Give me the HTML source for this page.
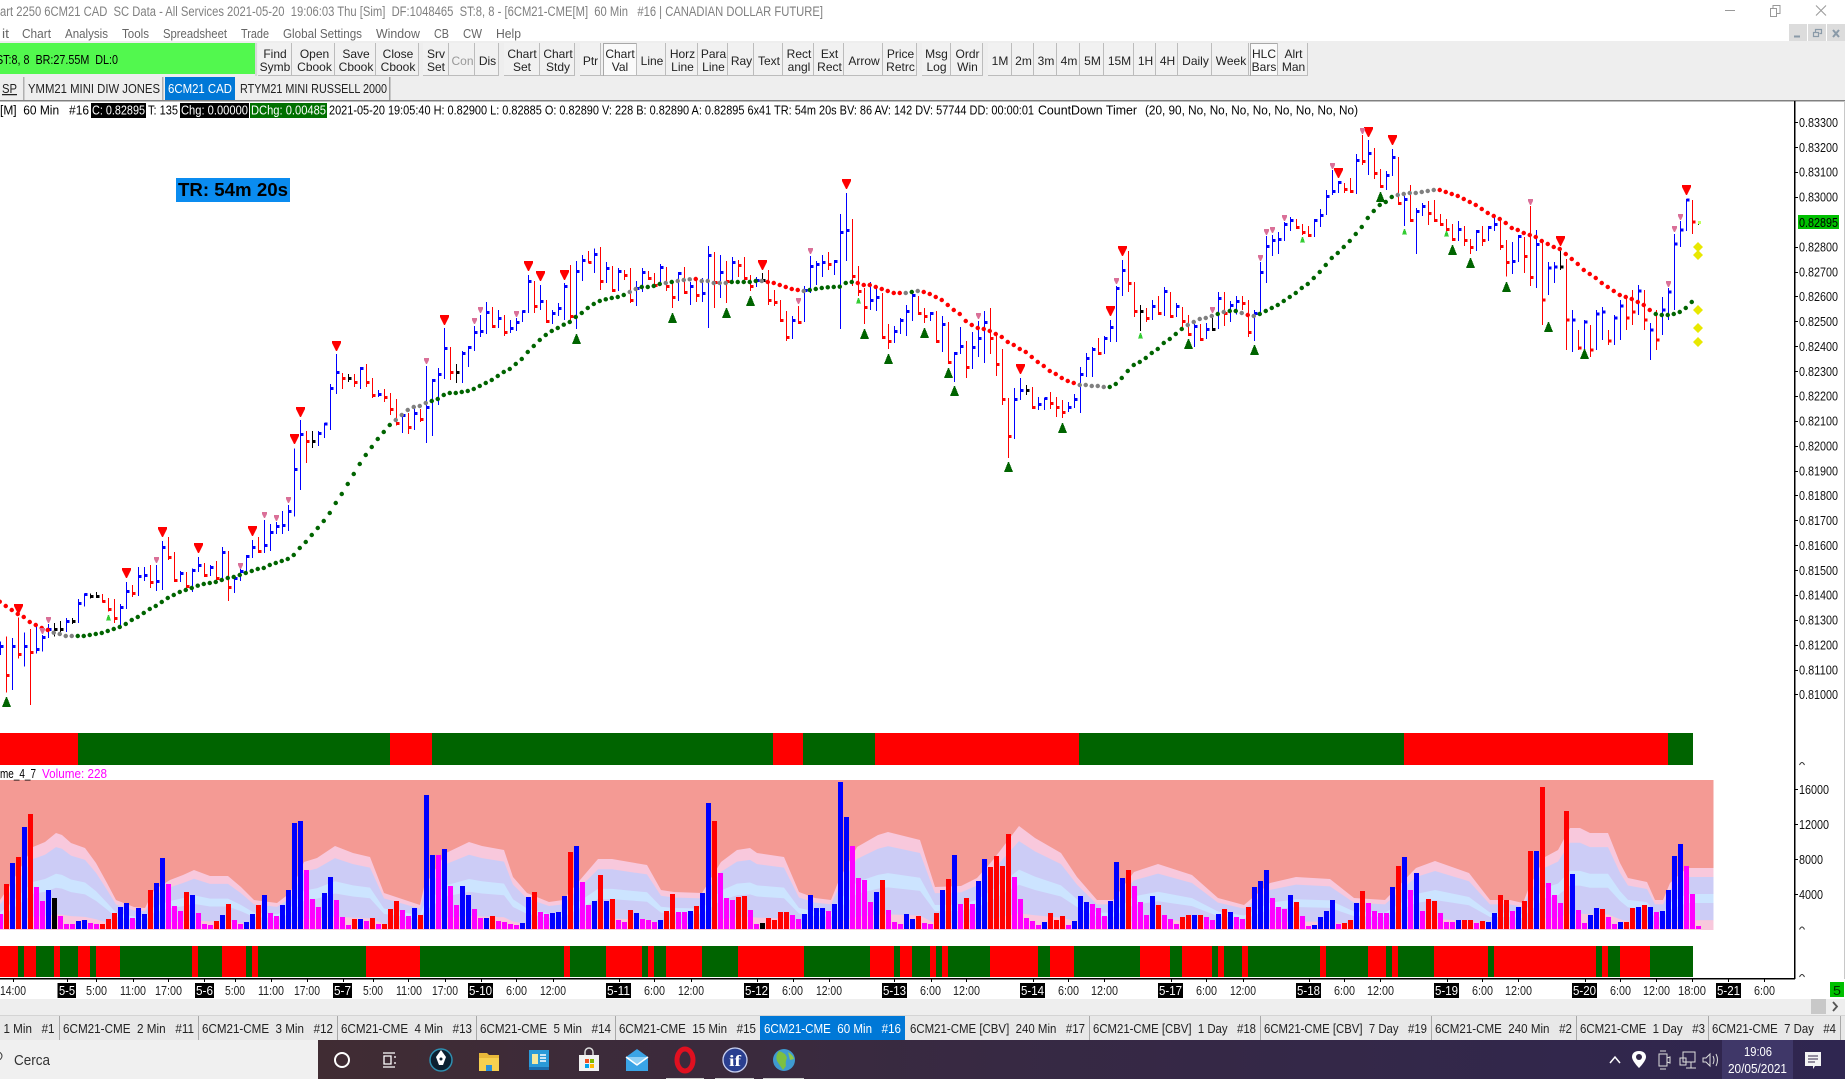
<!DOCTYPE html>
<html><head><meta charset="utf-8"><title>6CM21 CAD</title>
<style>
html,body{margin:0;padding:0;background:#fff;width:1845px;height:1079px;overflow:hidden}
svg{display:block;position:absolute;left:0;top:0}
text{font-family:"Liberation Sans",sans-serif;font-size:13px;white-space:pre;fill:#000}
.ttl text{fill:#808080;font-size:13.5px}
.men text{fill:#666;font-size:13px}
.btn text{font-size:12px;fill:#222;text-anchor:middle}
.tab text{font-size:12.5px;fill:#222}
.ax text{font-size:13px;fill:#111}
.tm text{font-size:13px;fill:#222}
.tw text{fill:#fff}
.v path,.l path,.q path{fill:none;vector-effect:non-scaling-stroke}
.v,.l{shape-rendering:crispEdges}
.v path{stroke-width:5}
.l path{stroke-width:1}
.l path.t{stroke-width:3}
.q path{stroke-width:4.4;stroke-linecap:round}
.r{stroke:#f00}.b{stroke:#00f}.m{stroke:#f0f}.k{stroke:#000}.g{stroke:#006400}.y{stroke:#808080}
</style></head><body>
<svg xmlns="http://www.w3.org/2000/svg" width="1845" height="1079" viewBox="0 0 1845 1079">
<rect width="1845" height="1079" fill="#fff"/>
<g class="ttl"><text x="0" y="16" textLength="823" lengthAdjust="spacingAndGlyphs">art 2250 6CM21 CAD  SC Data - All Services 2021-05-20  19:06:03 Thu [Sim]  DF:1048465  ST:8, 8 - [6CM21-CME[M]  60 Min   #16 | CANADIAN DOLLAR FUTURE]</text></g>
<path d="M1725 10.5h10" stroke="#999" fill="none"/>
<path d="M1770.5 8.5h6v8h-6zM1773 8.5v-3h7v8h-3" stroke="#999" fill="none"/>
<path d="M1816 5.5l10 10M1826 5.5l-10 10" stroke="#999" fill="none"/>
<rect x="1789" y="24" width="18" height="17" fill="#dcdcdc"/><rect x="1808" y="24" width="18" height="17" fill="#dcdcdc"/><rect x="1827" y="24" width="18" height="17" fill="#dcdcdc"/>
<path d="M1794 36.5h6" stroke="#8a9aa8" stroke-width="2"/>
<path d="M1813.5 32.5h5v4h-5zM1815.5 32v-2.5h6v4h-2" stroke="#8a9aa8" fill="none" stroke-width="1.2"/>
<path d="M1833 30l6 7M1839 30l-6 7" stroke="#8a9aa8" stroke-width="2"/>
<g class="men">
<text x="2" y="38" textLength="7" lengthAdjust="spacingAndGlyphs">it</text>
<text x="22" y="38" textLength="29" lengthAdjust="spacingAndGlyphs">Chart</text>
<text x="65" y="38" textLength="43" lengthAdjust="spacingAndGlyphs">Analysis</text>
<text x="122" y="38" textLength="27" lengthAdjust="spacingAndGlyphs">Tools</text>
<text x="163" y="38" textLength="64" lengthAdjust="spacingAndGlyphs">Spreadsheet</text>
<text x="241" y="38" textLength="28" lengthAdjust="spacingAndGlyphs">Trade</text>
<text x="283" y="38" textLength="79" lengthAdjust="spacingAndGlyphs">Global Settings</text>
<text x="376" y="38" textLength="44" lengthAdjust="spacingAndGlyphs">Window</text>
<text x="434" y="38" textLength="15" lengthAdjust="spacingAndGlyphs">CB</text>
<text x="463" y="38" textLength="19" lengthAdjust="spacingAndGlyphs">CW</text>
<text x="496" y="38" textLength="25" lengthAdjust="spacingAndGlyphs">Help</text>
</g>
<rect x="0" y="41" width="1845" height="59" fill="#eeeeee"/>
<rect x="0" y="100" width="1845" height="1.5" fill="#808080"/>
<rect x="0" y="43" width="255" height="31" fill="#52f84e"/>
<rect x="255" y="43" width="2" height="33" fill="#d8d8d8"/>
<text x="-4" y="64" textLength="122" lengthAdjust="spacingAndGlyphs">ST:8, 8  BR:27.55M  DL:0</text>
<!-- toolbar buttons -->
<g fill="#f1f1f1"><rect x="258" y="43" width="161" height="33"/><rect x="423" y="43" width="76" height="33"/><rect x="504" y="43" width="71" height="33"/><rect x="580" y="43" width="337" height="33"/><rect x="922" y="43" width="61" height="33"/><rect x="988" y="43" width="320" height="33"/></g>
<rect x="603" y="43" width="34" height="33" fill="#fafafa"/><rect x="1250" y="43" width="28" height="33" fill="#fafafa"/>
<path d="M258 75.5h161M423 75.5h76M504 75.5h71M580 75.5h337M922 75.5h61M988 75.5h320M291.5 43v33M334.5 43v33M375.5 43v33M418.5 43v33M448.5 43v33M474.5 43v33M498.5 43v33M539.5 43v33M574.5 43v33M600.5 43v33M636.5 43v33M665.5 43v33M697.5 43v33M727.5 43v33M753.5 43v33M782.5 43v33M813.5 43v33M843.5 43v33M882.5 43v33M916.5 43v33M950.5 43v33M982.5 43v33M1011.5 43v33M1033.5 43v33M1056.5 43v33M1079.5 43v33M1103.5 43v33M1133.5 43v33M1155.5 43v33M1177.5 43v33M1211.5 43v33M1248.5 43v33M1277.5 43v33M1307.5 43v33" stroke="#bcbcbc" fill="none" shape-rendering="crispEdges"/>
<path d="M603.5 76V43.5H636M1250.5 76V43.5H1277" stroke="#a8a8a8" fill="none" shape-rendering="crispEdges"/>
<g class="btn">
<text x="275" y="58">Find</text><text x="275" y="71">Symb</text>
<text x="314.5" y="58">Open</text><text x="314.5" y="71">Cbook</text>
<text x="356" y="58">Save</text><text x="356" y="71">Cbook</text>
<text x="398" y="58">Close</text><text x="398" y="71">Cbook</text>
<text x="436" y="58">Srv</text><text x="436" y="71">Set</text>
<text x="462.5" y="65" style="fill:#999">Con</text>
<text x="487.5" y="65">Dis</text>
<text x="522" y="58">Chart</text><text x="522" y="71">Set</text>
<text x="558" y="58">Chart</text><text x="558" y="71">Stdy</text>
<text x="590.5" y="65">Ptr</text>
<text x="620" y="58">Chart</text><text x="620" y="71">Val</text>
<text x="652" y="65">Line</text>
<text x="682.5" y="58">Horz</text><text x="682.5" y="71">Line</text>
<text x="713.5" y="58">Para</text><text x="713.5" y="71">Line</text>
<text x="741.5" y="65">Ray</text>
<text x="769" y="65">Text</text>
<text x="799" y="58">Rect</text><text x="799" y="71">angl</text>
<text x="829.5" y="58">Ext</text><text x="829.5" y="71">Rect</text>
<text x="864" y="65">Arrow</text>
<text x="900.5" y="58">Price</text><text x="900.5" y="71">Retrc</text>
<text x="936.5" y="58">Msg</text><text x="936.5" y="71">Log</text>
<text x="967.5" y="58">Ordr</text><text x="967.5" y="71">Win</text>
<text x="1000" y="65">1M</text><text x="1023.5" y="65">2m</text><text x="1046" y="65">3m</text><text x="1069" y="65">4m</text><text x="1092.5" y="65">5M</text>
<text x="1119.5" y="65">15M</text><text x="1145.5" y="65">1H</text><text x="1167.5" y="65">4H</text>
<text x="1195.5" y="65">Daily</text><text x="1231" y="65">Week</text>
<text x="1264" y="58">HLC</text><text x="1264" y="71">Bars</text>
<text x="1293.5" y="58">Alrt</text><text x="1293.5" y="71">Man</text>
</g>
<!-- symbol tabs -->
<rect x="23" y="77" width="1.5" height="23" fill="#b0b0b0"/>
<rect x="162" y="77" width="1.5" height="23" fill="#b0b0b0"/>
<rect x="165" y="77" width="70" height="23" fill="#0078d7"/>
<rect x="389" y="77" width="1.5" height="23" fill="#a0a0a0"/>
<g class="tab">
<text x="2" y="93" textLength="15" lengthAdjust="spacingAndGlyphs" style="text-decoration:underline">SP</text>
<text x="28" y="93" textLength="132" lengthAdjust="spacingAndGlyphs">YMM21 MINI DIW JONES</text>
<text x="168" y="93" textLength="64" lengthAdjust="spacingAndGlyphs" style="fill:#fff">6CM21 CAD</text>
<text x="240" y="93" textLength="147" lengthAdjust="spacingAndGlyphs">RTYM21 MINI RUSSELL 2000</text>
</g>
<!-- info line -->
<rect x="91" y="103" width="55" height="15" fill="#000"/>
<rect x="180" y="103" width="69" height="15" fill="#000"/>
<rect x="250" y="103" width="77" height="15" fill="#007000"/>
<text x="0" y="114.5" textLength="89" lengthAdjust="spacingAndGlyphs">[M]  60 Min   #16</text>
<text x="92" y="114.5" textLength="53" lengthAdjust="spacingAndGlyphs" style="fill:#fff">C: 0.82895</text>
<text x="148" y="114.5" textLength="30" lengthAdjust="spacingAndGlyphs">T: 135</text>
<text x="181" y="114.5" textLength="67" lengthAdjust="spacingAndGlyphs" style="fill:#fff">Chg: 0.00000</text>
<text x="251" y="114.5" textLength="75" lengthAdjust="spacingAndGlyphs" style="fill:#fff">DChg: 0.00485</text>
<text x="329" y="114.5" textLength="705" lengthAdjust="spacingAndGlyphs">2021-05-20 19:05:40 H: 0.82900 L: 0.82885 O: 0.82890 V: 228 B: 0.82890 A: 0.82895 6x41 TR: 54m 20s BV: 86 AV: 142 DV: 57744 DD: 00:00:01</text>
<text x="1038" y="114.5" textLength="99" lengthAdjust="spacingAndGlyphs">CountDown Timer</text>
<text x="1145" y="114.5" textLength="213" lengthAdjust="spacingAndGlyphs">(20, 90, No, No, No, No, No, No, No, No)</text>
<rect x="176" y="178" width="114" height="24" fill="#0a8cf0"/>
<text x="178" y="196" textLength="110" lengthAdjust="spacingAndGlyphs" style="font-size:18px;font-weight:bold">TR: 54m 20s</text>

<!-- volume pane background + bands -->
<rect x="0" y="780" width="1713.5" height="150" fill="#f49a94"/>
<defs><polygon id="env" points="0,0 0,30 9,43 33,83 45,88 56,97 62,95 71,87 85,82 96,67 107,47 116,30 134,23 145,22 154,40 170,50 183,55 194,60 210,54 228,54 241,43 254,30 277,27 290,37 304,68 317,72 335,84 353,77 370,73 384,37 420,25 424,43 446,77 469,88 482,84 504,80 513,53 527,37 549,28 563,30 580,50 598,71 612,71 647,65 661,40 674,38 702,37 721,68 737,80 750,82 757,77 784,73 799,38 815,32 831,30 839,50 857,83 878,95 888,98 920,90 935,43 961,44 977,52 993,70 1019,104 1035,92 1061,77 1077,53 1097,30 1113,30 1134,58 1158,66 1192,55 1218,32 1244,25 1270,47 1296,53 1330,51 1354,32 1385,30 1416,62 1435,69 1469,57 1490,30 1510,30 1523,27 1528,40 1545,73 1558,80 1570,102 1580,102 1590,97 1608,97 1620,67 1628,52 1647,48 1655,30 1663,30 1670,47 1687,62 1713.5,62 1713.5,0"/></defs>
<use href="#env" transform="translate(0,930) scale(1,-1)" fill="#f8c8dc"/>
<use href="#env" transform="translate(0,930) scale(1,-.855)" fill="#ccccf6"/>
<use href="#env" transform="translate(0,930) scale(1,-.58)" fill="#cce4ff"/>
<use href="#env" transform="translate(0,930) scale(1,-.435)" fill="#ccccf6"/>
<use href="#env" transform="translate(0,930) scale(1,-.16)" fill="#f8c8dc"/>

<!-- colour strips -->
<g fill="none" shape-rendering="crispEdges">
<path d="M0 749H1668" stroke="#f00" stroke-width="32"/>
<path d="M78 749H390M432 749H773M803 749H875M1079 749H1404M1668 749H1693" stroke="#006400" stroke-width="32"/>
<path d="M0 961.5H1650" stroke="#f00" stroke-width="31"/>
<path d="M18 961.5H24M36 961.5H54M60 961.5H78M90 961.5H96M120 961.5H192M198 961.5H222M246 961.5H252M258 961.5H366M420 961.5H564M570 961.5H606M642 961.5H648M654 961.5H666M702 961.5H738M804 961.5H870M894 961.5H900M912 961.5H930M936 961.5H942M948 961.5H990M1038 961.5H1050M1074 961.5H1140M1170 961.5H1182M1212 961.5H1218M1224 961.5H1242M1248 961.5H1320M1326 961.5H1368M1386 961.5H1392M1398 961.5H1434M1488 961.5H1494M1596 961.5H1602M1608 961.5H1620M1650 961.5H1693" stroke="#006400" stroke-width="31"/>
</g>

<!-- volume bars -->
<g class="v" transform="translate(.5,720) scale(1,.33333)">
<path class="m" d="M0 582V627M36 501V627M42 543V627M60 588V627M66 612V627M72 612V627M90 609V627M96 612V627M132 594V627M168 492V627M174 558V627M180 573V627M198 579V627M204 612V627M210 615V627M234 600V627M240 612V627M270 579V627M276 588V627M306 450V627M312 537V627M318 561V627M336 540V627M342 591V627M348 615V627M366 603V627M378 612V627M402 570V627M408 588V627M438 405V627M450 498V627M456 555V627M474 567V627M480 594V627M498 603V627M504 606V627M510 612V627M516 615V627M540 576V627M546 582V627M582 486V627M588 555V627M618 600V627M624 606V627M642 597V627M648 600V627M654 606V627M678 576V627M684 576V627M1512 573V627M1548 489V627M1554 525V627M1560 549V627M1578 570V627M1584 609V627M1608 591V627M1614 612V627M1656 576V627M1686 438V627M1692 522V627M1698 618V627"/>
<path class="r" d="M6 492V627M18 411V627M30 282V627M102 612V627M108 597V627M114 579V627M150 510V627M186 516V627M216 603V627M228 552V627M258 555V627M354 597V627M372 594V627M384 612V627M390 567V627M396 543V627M420 585V627M492 588V627M534 516V627M570 396V627M600 465V627M612 537V627M630 570V627M666 573V627M672 522V627M696 558V627M1500 525V627M1506 540V627M1524 543V627M1530 393V627M1542 201V627M1566 273V627M1602 567V627M1626 606V627M1632 564V627M1644 555V627"/>
<path class="b" d="M12 429V627M24 321V627M48 510V627M78 603V627M84 600V627M120 561V627M126 549V627M138 564V627M144 582V627M156 489V627M162 414V627M192 525V627M222 585V627M246 606V627M252 582V627M264 525V627M282 555V627M288 510V627M294 309V627M300 303V627M324 519V627M330 471V627M360 597V627M414 564V627M426 225V627M432 405V627M444 387V627M462 498V627M468 525V627M486 594V627M522 609V627M528 531V627M552 579V627M558 576V627M564 528V627M576 378V627M594 543V627M606 543V627M636 579V627M660 600V627M690 573V627M1518 561V627M1536 393V627M1572 462V627M1590 585V627M1596 564V627M1620 606V627M1638 561V627M1650 561V627M1662 573V627M1668 510V627M1674 408V627M1680 372V627"/>
<path class="k" d="M54 534V627"/>
</g>
<g class="v" transform="translate(.5,770) scale(1,.33333)">
<path class="m" d="M720 309V477M726 384V477M732 390V477M750 420V477M756 462V477M792 435V477M798 447V477M828 423V477M852 228V477M858 324V477M864 330V477M870 396V477M888 420V477M894 456V477M900 462V477M924 459V477M930 462V477M960 402V477M972 402V477M1014 321V477M1020 387V477M1026 444V477M1032 453V477M1038 465V477M1068 465V477M1092 402V477M1098 414V477M1104 438V477M1134 348V477M1140 396V477M1146 435V477M1164 435V477M1170 447V477M1176 462V477M1206 441V477M1212 450V477M1236 441V477M1242 447V477M1272 384V477M1278 411V477M1284 417V477M1302 438V477M1308 468V477M1338 462V477M1368 399V477M1374 423V477M1380 429V477M1386 429V477M1410 360V477M1422 423V477M1440 429V477M1446 456V477M1452 456V477M1476 459V477"/>
<path class="r" d="M714 153V477M738 381V477M744 378V477M768 444V477M774 450V477M780 426V477M786 426V477M882 330V477M918 438V477M936 429V477M948 327V477M966 384V477M990 291V477M996 258V477M1002 288V477M1008 192V477M1050 429V477M1056 450V477M1062 438V477M1128 300V477M1158 405V477M1182 441V477M1188 435V477M1200 435V477M1224 417V477M1248 411V477M1296 396V477M1344 459V477M1350 450V477M1362 363V477M1398 288V477M1428 387V477M1434 393V477M1464 450V477M1470 450V477M1482 453V477"/>
<path class="b" d="M702 369V477M708 99V477M804 432V477M810 375V477M816 414V477M822 414V477M834 402V477M840 36V477M846 141V477M876 366V477M906 432V477M912 447V477M942 360V477M954 255V477M978 333V477M984 267V477M1044 456V477M1074 453V477M1080 378V477M1086 396V477M1110 393V477M1116 276V477M1122 324V477M1152 378V477M1194 435V477M1218 432V477M1230 426V477M1254 351V477M1260 333V477M1266 300V477M1290 375V477M1314 465V477M1320 441V477M1326 423V477M1332 390V477M1356 399V477M1392 351V477M1404 261V477M1416 309V477M1458 450V477M1488 456V477M1494 429V477"/>
<path class="k" d="M762 459V477"/>
</g>

<!-- HLC bars -->
<g class="l" transform="translate(.49,440) scale(1,.33333)">
<path class="b" d="M0 605V645M12 594V750M24 578V680M36 555V640M42 585V635M48 552V594M66 534V576M78 477V549M84 460V500M120 492V567M126 426V507M138 381V468M144 381V423M156 375V453M162 303V450M180 393V426M192 385V456M198 351V396M210 375V408M222 321V417M234 411V459M240 385V423M246 345V400M252 300V354M264 240V339M270 252V333M276 246V282M282 213V282M288 195V273"/>
<path class="t b" d="M0 619h3M12 619h3M24 619h3M36 628h3M42 592h3M48 568h3M66 544h3M78 490h3M84 463h3M120 502h3M126 454h3M138 409h3M144 406h3M156 424h3M162 322h3M180 400h3M192 391h3M198 376h3M210 382h3M222 337h3M234 415h3M240 394h3M246 349h3M252 322h3M264 316h3M270 277h3M276 259h3M282 256h3M288 214h3"/>
<path class="r" d="M6 590V758M18 533V656M30 567V795M102 462V488M108 474V515M114 477V549M132 435V471M150 375V444M168 291V360M174 336V426M186 396V444M204 369V411M216 363V420M228 333V483M258 291V339"/>
<path class="t r" d="M6 706h3M18 643h3M30 637h3M102 484h3M108 509h3M114 535h3M132 460h3M150 427h3M168 352h3M174 421h3M186 439h3M204 406h3M216 415h3M228 442h3M258 334h3"/>
<path class="k" d="M54 549V590M60 543V588M72 534V552M90 460V476M96 456V474"/>
<path class="t k" d="M54 568h3M60 568h3M72 544h3M90 469h3M96 469h3"/>
</g>
<g class="l" transform="translate(.49,250) scale(1,.33333)">
<path class="b" d="M294 595V800M300 510V720M318 543V588M324 519V564M330 402V540M336 312V432M360 351V417M378 420V441M402 492V549M414 471V540M426 348V579M432 387V558M438 354V465M444 234V387M462 303V399M468 288V351M474 228V303M480 195V261M486 156V252M498 180V234M510 210V249M516 204V243M522 181V216M528 75V189M540 105V180M552 180V222M558 159V198M564 99V210M576 33V237M582 15V93M594 -4V69"/>
<path class="t b" d="M294 658h3M300 553h3M318 550h3M324 522h3M330 415h3M336 367h3M360 355h3M378 433h3M402 496h3M414 490h3M426 472h3M432 391h3M438 373h3M444 295h3M462 310h3M468 292h3M474 247h3M480 244h3M486 187h3M498 205h3M510 235h3M516 217h3M522 184h3M528 94h3M540 154h3M552 190h3M558 175h3M564 109h3M576 64h3M582 31h3M594 13h3"/>
<path class="r" d="M306 543V639M342 369V417M354 372V411M366 342V411M372 384V444M384 417V456M390 429V495M396 447V526M408 489V552M420 477V516M450 291V390M492 171V234M504 195V258M534 93V189M546 150V219M570 45V216M588 3V39"/>
<path class="t r" d="M306 574h3M342 385h3M354 397h3M366 397h3M372 436h3M384 442h3M390 478h3M396 520h3M408 532h3M420 509h3M450 367h3M492 229h3M504 247h3M534 169h3M546 214h3M570 199h3M588 37h3"/>
<path class="k" d="M312 543V594M348 372V396M456 342V399"/>
<path class="t k" d="M312 574h3M348 385h3M456 367h3"/>
</g>
<g class="l" transform="translate(.49,170) scale(1,.33333)">
<path class="b" d="M606 276V339M618 294V363M636 333V408M642 294V366M660 282V345M678 306V393M690 336V405M702 324V396M708 228V474M720 255V384M732 261V339M756 321V351M792 438V507M804 348V456M810 258V369M816 273V345M822 255V321M834 270V315M840 132V477M846 69V273M870 336V420M876 345V423M894 468V519M900 444V492M906 405V498M912 360V453M930 426V453M942 438V546M954 546V636M960 471V552M972 486V597M978 453V561M984 423V579M1014 654V807M1020 624V690M1038 681V720M1044 684V720M1068 696V726M1074 672V714M1080 591V729M1086 549V621M1092 531V621"/>
<path class="t b" d="M606 295h3M618 304h3M636 355h3M642 307h3M660 292h3M678 310h3M690 349h3M702 370h3M708 256h3M720 307h3M732 277h3M756 331h3M792 451h3M804 361h3M810 289h3M816 283h3M822 277h3M834 274h3M840 187h3M846 181h3M870 391h3M876 382h3M894 484h3M900 451h3M906 424h3M912 376h3M930 430h3M942 463h3M954 550h3M960 529h3M972 532h3M978 505h3M984 457h3M1014 688h3M1020 661h3M1038 703h3M1044 685h3M1068 712h3M1074 688h3M1080 613h3M1086 565h3M1092 538h3"/>
<path class="r" d="M600 231V360M612 288V366M624 300V330M630 294V399M648 303V330M654 309V351M666 291V363M672 333V414M684 291V372M696 327V396M714 246V414M726 273V399M738 270V321M744 261V330M750 315V363M768 300V405M774 360V408M780 390V456M786 423V513M798 408V462M828 246V300M852 147V348M858 288V378M864 354V462M882 369V507M888 462V537M918 378V435M924 414V459M936 423V519M948 456V582M966 513V624M990 414V552M996 486V618M1002 537V705M1008 684V864M1032 651V717M1050 666V717M1056 681V741M1062 690V744M1098 504V555"/>
<path class="t r" d="M600 334h3M612 361h3M624 316h3M630 391h3M648 325h3M654 346h3M666 349h3M672 382h3M684 367h3M696 376h3M714 337h3M726 334h3M738 286h3M744 325h3M750 349h3M768 391h3M774 397h3M780 451h3M786 502h3M798 457h3M828 283h3M852 319h3M858 364h3M864 412h3M882 502h3M888 514h3M918 430h3M924 439h3M936 514h3M948 577h3M966 592h3M990 505h3M996 583h3M1002 688h3M1008 799h3M1032 712h3M1050 700h3M1056 712h3M1062 727h3M1098 550h3"/>
<path class="k" d="M762 309V339M1026 645V675"/>
<path class="t k" d="M762 331h3M1026 661h3"/>
</g>
<g class="l" transform="translate(.49,120) scale(1,.33333)">
<path class="b" d="M1104 648V702M1110 600V666M1116 498V666M1122 420V528M1152 540V600M1164 501V588M1176 549V591M1194 612V681M1206 609V657M1218 516V627M1230 543V606M1236 528V584M1254 570V663M1260 426V576M1266 348V489M1272 345V408M1278 336V402M1284 306V363M1290 291V333M1314 297V351M1320 267V321M1326 210V285M1332 150V225M1338 183V219M1356 102V222M1368 60V165M1386 153V210M1392 87V168M1404 228V318M1416 264V402M1422 249V288M1458 303V363M1476 330V393M1488 318V363"/>
<path class="t b" d="M1104 655h3M1110 622h3M1116 505h3M1122 451h3M1152 559h3M1164 514h3M1176 559h3M1194 619h3M1206 628h3M1218 535h3M1230 556h3M1236 544h3M1254 580h3M1260 457h3M1266 379h3M1272 361h3M1278 358h3M1284 313h3M1290 301h3M1314 301h3M1320 286h3M1326 229h3M1332 214h3M1338 187h3M1356 121h3M1368 100h3M1386 166h3M1392 112h3M1404 238h3M1416 274h3M1422 259h3M1458 328h3M1476 334h3M1488 322h3"/>
<path class="r" d="M1128 393V516M1134 486V591M1146 564V606M1158 528V585M1170 516V594M1182 561V621M1188 585V648M1200 612V663M1224 516V618M1242 528V570M1248 540V651M1296 297V327M1302 312V345M1308 318V351M1344 189V219M1350 174V219M1362 45V135M1374 84V177M1380 147V204M1398 111V255M1410 195V306M1428 243V315M1434 240V306M1440 282V318M1446 297V333M1452 312V363M1464 318V378M1470 357V402M1482 318V378"/>
<path class="t r" d="M1128 490h3M1134 574h3M1146 595h3M1158 580h3M1170 589h3M1182 604h3M1188 643h3M1200 658h3M1224 580h3M1242 550h3M1248 637h3M1296 322h3M1302 337h3M1308 346h3M1344 208h3M1350 214h3M1362 124h3M1374 160h3M1380 199h3M1398 250h3M1410 301h3M1428 280h3M1434 301h3M1440 313h3M1446 328h3M1452 358h3M1464 361h3M1470 382h3M1482 361h3"/>
<path class="k" d="M1140 555V633M1212 585V633"/>
<path class="t k" d="M1140 574h3M1212 628h3"/>
</g>
<g class="l" transform="translate(.49,0) scale(1,.33333)">
<path class="b" d="M1494 642V693M1512 726V822M1518 705V786M1536 690V864"/>
<path class="t b" d="M1494 673h3M1512 785h3M1518 709h3M1536 733h3"/>
<path class="r" d="M1500 654V750M1506 720V830M1524 711V819M1530 618V858"/>
<path class="t r" d="M1500 740h3M1506 787h3M1524 769h3M1530 832h3"/>
</g>
<g class="l" transform="translate(.49,0)">
<path class="b" d="M1548 262V295M1554 262V283M1572 310V352M1584 320V355M1596 310V350M1602 307V340M1614 315V345M1620 300V340M1638 285V315M1650 323V360M1662 297V335M1668 288V320M1674 234V310M1680 221V247M1686 199V231"/>
<path class="t b" d="M1548 268h3M1554 267h3M1572 320h3M1584 322h3M1596 314h3M1602 312h3M1614 318h3M1620 306h3M1638 291h3M1650 330h3M1662 310h3M1668 292h3M1674 244h3M1680 230h3M1686 200h3"/>
<path class="r" d="M1542 240V325M1566 259V350M1578 330V350M1590 325V357M1608 330V345M1626 295V330M1632 290V325M1644 290V330M1656 310V350M1692 200V234"/>
<path class="t r" d="M1542 300h3M1566 320h3M1578 348h3M1590 350h3M1608 341h3M1626 318h3M1632 312h3M1644 320h3M1656 340h3M1692 222h3"/>
<path class="k" d="M1560 250V270"/>
<path class="t k" d="M1560 267h3"/>
</g>

<!-- study dots -->
<g class="q" transform="translate(-.3,440) scale(1,.33333)">
<path class="r" d="M0 485h.1M6 498h.1M12 510h.1M18 522h.1M24 531h.1M30 546h.1M36 555h.1M42 564h.1M48 570h.1"/>
<path class="y" d="M54 578h.1M60 582h.1M66 588h.1M72 588h.1"/>
<path class="g" d="M78 588h.1M84 588h.1M90 585h.1M96 582h.1M102 579h.1M108 573h.1M114 567h.1M120 561h.1M126 552h.1M132 540h.1M138 531h.1M144 519h.1M150 507h.1M156 498h.1M162 486h.1M168 474h.1M174 465h.1M180 456h.1M186 450h.1M192 444h.1M198 437h.1M204 432h.1M210 429h.1M216 426h.1M222 420h.1M228 414h.1M234 411h.1M240 405h.1M246 399h.1M252 393h.1M258 387h.1M264 384h.1M270 375h.1M276 369h.1M282 363h.1M288 357h.1M294 345h.1"/>
</g>
<g class="q" transform="translate(-.3,250) scale(1,.33333)">
<path class="g" d="M300 894h.1M306 876h.1M312 855h.1M318 834h.1M324 813h.1M330 789h.1M336 759h.1M342 732h.1M348 702h.1M354 672h.1M360 642h.1M366 615h.1M372 591h.1M378 567h.1M384 546h.1M390 525h.1M432 453h.1M438 447h.1M444 435h.1M450 429h.1M456 429h.1M462 426h.1M468 423h.1M474 417h.1M480 408h.1M486 399h.1M492 390h.1M498 378h.1M504 366h.1M510 357h.1M516 342h.1M522 327h.1M528 306h.1M534 288h.1M540 270h.1M546 255h.1M552 243h.1M558 234h.1M564 224h.1M570 216h.1M576 201h.1M582 189h.1M588 174h.1M594 162h.1M600 153h.1M606 148h.1M612 144h.1M618 141h.1M624 135h.1M642 111h.1M648 111h.1M654 108h.1M660 102h.1M672 96h.1"/>
<path class="y" d="M396 510h.1M402 495h.1M408 480h.1M414 471h.1M420 468h.1M426 459h.1M630 126h.1M636 117h.1M666 99h.1M678 93h.1M684 90h.1M690 88h.1"/>
<path class="r" d="M696 87h.1"/>
</g>
<g class="q" transform="translate(-.3,170) scale(1,.33333)">
<path class="y" d="M702 333h.1M708 333h.1M714 339h.1M720 339h.1M726 339h.1M762 333h.1M804 363h.1M906 369h.1M918 363h.1"/>
<path class="g" d="M732 336h.1M738 336h.1M744 336h.1M750 336h.1M756 333h.1M810 360h.1M816 357h.1M822 354h.1M828 352h.1M834 351h.1M840 350h.1M846 339h.1M852 336h.1M912 366h.1"/>
<path class="r" d="M768 336h.1M774 339h.1M780 345h.1M786 351h.1M792 357h.1M798 360h.1M858 339h.1M864 345h.1M870 345h.1M876 351h.1M882 357h.1M888 363h.1M894 369h.1M900 369h.1M924 366h.1M930 372h.1M936 381h.1M942 390h.1M948 405h.1M954 420h.1M960 432h.1M966 453h.1M972 465h.1M978 474h.1M984 477h.1M990 483h.1M996 492h.1"/>
</g>
<g class="q" transform="translate(-.3,120) scale(1,.33333)">
<path class="r" d="M1002 651h.1M1008 666h.1M1014 675h.1M1020 687h.1M1026 696h.1M1032 711h.1M1038 726h.1M1044 738h.1M1050 753h.1M1056 762h.1M1062 774h.1M1068 783h.1M1074 789h.1M1248 585h.1"/>
<path class="y" d="M1080 795h.1M1086 795h.1M1092 798h.1M1098 798h.1M1104 801h.1M1188 615h.1M1194 606h.1M1200 597h.1M1206 594h.1M1212 588h.1M1224 576h.1M1242 579h.1M1254 588h.1M1398 225h.1"/>
<path class="g" d="M1110 801h.1M1116 792h.1M1122 774h.1M1128 753h.1M1134 735h.1M1140 726h.1M1146 714h.1M1152 699h.1M1158 687h.1M1164 669h.1M1170 657h.1M1176 642h.1M1182 627h.1M1218 582h.1M1230 573h.1M1236 573h.1M1260 582h.1M1266 573h.1M1272 564h.1M1278 555h.1M1284 543h.1M1290 531h.1M1296 519h.1M1302 504h.1M1308 492h.1M1314 474h.1M1320 456h.1M1326 435h.1M1332 414h.1M1338 399h.1M1344 381h.1M1350 363h.1M1356 342h.1M1362 321h.1M1368 294h.1M1374 273h.1M1380 255h.1M1386 246h.1M1392 231h.1"/>
</g>
<g class="q" transform="translate(-.3,0) scale(1,.33333)">
<path class="y" d="M1404 582h.1M1410 579h.1M1416 579h.1M1422 576h.1M1428 573h.1M1434 570h.1"/>
<path class="r" d="M1440 570h.1M1446 576h.1M1452 582h.1M1458 588h.1M1464 597h.1M1470 606h.1M1476 615h.1M1482 627h.1M1488 639h.1M1494 648h.1M1500 657h.1M1506 669h.1M1512 684h.1M1518 690h.1M1524 699h.1M1530 705h.1M1536 711h.1M1542 723h.1M1548 732h.1M1554 741h.1M1560 747h.1M1566 762h.1M1572 777h.1M1578 792h.1M1584 810h.1M1590 822h.1M1596 834h.1M1602 849h.1M1608 861h.1M1614 873h.1M1620 885h.1M1626 891h.1M1632 897h.1M1638 906h.1M1644 915h.1M1650 930h.1"/>
<path class="g" d="M1656 942h.1M1662 945h.1M1668 945h.1M1674 942h.1M1680 936h.1M1686 924h.1M1692 906h.1"/>
</g>

<!-- signal markers -->
<g shape-rendering="crispEdges">
<path fill="#f00" d="M14 604h9v2l-4 8h-1l-4-8zM122 568h9v2l-4 8h-1l-4-8zM158 527h9v2l-4 8h-1l-4-8zM194 543h9v2l-4 8h-1l-4-8zM248 526h9v2l-4 8h-1l-4-8zM290 434h9v2l-4 8h-1l-4-8zM296 407h9v2l-4 8h-1l-4-8zM332 341h9v2l-4 8h-1l-4-8zM440 315h9v2l-4 8h-1l-4-8zM524 261h9v2l-4 8h-1l-4-8zM536 271h9v2l-4 8h-1l-4-8zM560 270h9v2l-4 8h-1l-4-8zM758 260h9v2l-4 8h-1l-4-8zM842 179h9v2l-4 8h-1l-4-8zM1016 364h9v2l-4 8h-1l-4-8zM1106 306h9v2l-4 8h-1l-4-8zM1118 246h9v2l-4 8h-1l-4-8zM1334 168h9v2l-4 8h-1l-4-8zM1364 127h9v2l-4 8h-1l-4-8zM1388 135h9v2l-4 8h-1l-4-8zM1556 236h9v2l-4 8h-1l-4-8zM1682 185h9v2l-4 8h-1l-4-8z"/>
<path fill="#da7098" d="M46 617h5v2l-2 4h-1l-2-4zM40 628h5v2l-2 4h-1l-2-4zM154 557h5v2l-2 4h-1l-2-4zM238 563h5v2l-2 4h-1l-2-4zM262 512h5v2l-2 4h-1l-2-4zM274 515h5v2l-2 4h-1l-2-4zM286 497h5v2l-2 4h-1l-2-4zM424 358h5v2l-2 4h-1l-2-4zM472 318h5v2l-2 4h-1l-2-4zM478 307h5v2l-2 4h-1l-2-4zM514 311h5v2l-2 4h-1l-2-4zM808 248h5v2l-2 4h-1l-2-4zM796 298h5v2l-2 4h-1l-2-4zM976 313h5v2l-2 4h-1l-2-4zM1114 278h5v2l-2 4h-1l-2-4zM1210 307h5v2l-2 4h-1l-2-4zM1258 255h5v2l-2 4h-1l-2-4zM1264 229h5v2l-2 4h-1l-2-4zM1270 227h5v2l-2 4h-1l-2-4zM1282 215h5v2l-2 4h-1l-2-4zM1330 163h5v2l-2 4h-1l-2-4zM1360 128h5v2l-2 4h-1l-2-4zM1528 199h5v2l-2 4h-1l-2-4zM1672 226h5v2l-2 4h-1l-2-4zM1678 214h5v2l-2 4h-1l-2-4zM1666 281h5v2l-2 4h-1l-2-4z"/>
<path fill="#006400" d="M6 697h1l4 10h-9zM576 334h1l4 10h-9zM672 313h1l4 10h-9zM726 308h1l4 10h-9zM750 296h1l4 10h-9zM864 329h1l4 10h-9zM924 328h1l4 10h-9zM888 354h1l4 10h-9zM948 368h1l4 10h-9zM954 386h1l4 10h-9zM1008 462h1l4 10h-9zM1062 423h1l4 10h-9zM1188 339h1l4 10h-9zM1254 345h1l4 10h-9zM1380 192h1l4 10h-9zM1452 245h1l4 10h-9zM1470 258h1l4 10h-9zM1506 282h1l4 10h-9zM1548 322h1l4 10h-9zM1584 349h1l4 10h-9z"/>
<path fill="#33cc33" d="M108 615h1l2 5.5h-5zM858 298h1l2 5.5h-5zM1140 333h1l2 5.5h-5zM1302 237h1l2 5.5h-5zM1404 229h1l2 5.5h-5zM1446 231h1l2 5.5h-5z"/>
<rect x="1698" y="221" width="3" height="3" fill="#c0ff60"/><rect x="1698" y="224" width="1" height="1" fill="#006400"/>
</g>
<path fill="#e8e800" d="M1698 242l5 5-5 5-5-5zM1698 250l5 5-5 5-5-5zM1698 305l5 5-5 5-5-5zM1698 323l5 5-5 5-5-5zM1698 337l5 5-5 5-5-5z"/>

<text x="0" y="778" textLength="36" lengthAdjust="spacingAndGlyphs">me_4_7</text>
<text x="42" y="778" textLength="65" lengthAdjust="spacingAndGlyphs" style="fill:#ff00ff">Volume: 228</text>

<!-- axes -->
<rect x="1794" y="101" width="1.5" height="878" fill="#000"/>
<rect x="0" y="978" width="1795" height="1.5" fill="#000"/>
<rect x="1844" y="101" width="1" height="878" fill="#c8c8c8"/>
<path stroke="#000" fill="none" shape-rendering="crispEdges" d="M1795 122.5h3M1795 147.5h3M1795 172.5h3M1795 197.5h3M1795 247.5h3M1795 272.5h3M1795 296.5h3M1795 321.5h3M1795 346.5h3M1795 371.5h3M1795 396.5h3M1795 421.5h3M1795 446.5h3M1795 471.5h3M1795 495.5h3M1795 520.5h3M1795 545.5h3M1795 570.5h3M1795 595.5h3M1795 620.5h3M1795 645.5h3M1795 670.5h3M1795 694.5h3M1795 789.5h3M1795 824.5h3M1795 859.5h3M1795 894.5h3M13.5 979v3M67.5 979v3M96.5 979v3M133.5 979v3M168.5 979v3M204.5 979v3M235.5 979v3M271.5 979v3M307.5 979v3M343.5 979v3M373.5 979v3M408.5 979v3M445.5 979v3M481.5 979v3M516.5 979v3M553.5 979v3M619.5 979v3M654.5 979v3M691.5 979v3M757.5 979v3M793.5 979v3M829.5 979v3M894.5 979v3M931.5 979v3M966.5 979v3M1033.5 979v3M1068.5 979v3M1104.5 979v3M1171.5 979v3M1206.5 979v3M1243.5 979v3M1309.5 979v3M1344.5 979v3M1380.5 979v3M1447.5 979v3M1482.5 979v3M1518.5 979v3M1585.5 979v3M1620.5 979v3M1656.5 979v3M1692.5 979v3M1728.5 979v3M1764.5 979v3"/>
<rect x="1798" y="215" width="41" height="14" fill="#00c000"/>
<g class="ax">
<text x="1799" y="127" textLength="39" lengthAdjust="spacingAndGlyphs">0.83300</text>
<text x="1799" y="152" textLength="39" lengthAdjust="spacingAndGlyphs">0.83200</text>
<text x="1799" y="176.5" textLength="39" lengthAdjust="spacingAndGlyphs">0.83100</text>
<text x="1799" y="201.5" textLength="39" lengthAdjust="spacingAndGlyphs">0.83000</text>
<text x="1799" y="227" textLength="39" lengthAdjust="spacingAndGlyphs" style="fill:#000">0.82895</text>
<text x="1799" y="251.5" textLength="39" lengthAdjust="spacingAndGlyphs">0.82800</text>
<text x="1799" y="276.5" textLength="39" lengthAdjust="spacingAndGlyphs">0.82700</text>
<text x="1799" y="301" textLength="39" lengthAdjust="spacingAndGlyphs">0.82600</text>
<text x="1799" y="326" textLength="39" lengthAdjust="spacingAndGlyphs">0.82500</text>
<text x="1799" y="351" textLength="39" lengthAdjust="spacingAndGlyphs">0.82400</text>
<text x="1799" y="376" textLength="39" lengthAdjust="spacingAndGlyphs">0.82300</text>
<text x="1799" y="400.5" textLength="39" lengthAdjust="spacingAndGlyphs">0.82200</text>
<text x="1799" y="425.5" textLength="39" lengthAdjust="spacingAndGlyphs">0.82100</text>
<text x="1799" y="450.5" textLength="39" lengthAdjust="spacingAndGlyphs">0.82000</text>
<text x="1799" y="475.5" textLength="39" lengthAdjust="spacingAndGlyphs">0.81900</text>
<text x="1799" y="500" textLength="39" lengthAdjust="spacingAndGlyphs">0.81800</text>
<text x="1799" y="525" textLength="39" lengthAdjust="spacingAndGlyphs">0.81700</text>
<text x="1799" y="550" textLength="39" lengthAdjust="spacingAndGlyphs">0.81600</text>
<text x="1799" y="575" textLength="39" lengthAdjust="spacingAndGlyphs">0.81500</text>
<text x="1799" y="599.5" textLength="39" lengthAdjust="spacingAndGlyphs">0.81400</text>
<text x="1799" y="624.5" textLength="39" lengthAdjust="spacingAndGlyphs">0.81300</text>
<text x="1799" y="649.5" textLength="39" lengthAdjust="spacingAndGlyphs">0.81200</text>
<text x="1799" y="674.5" textLength="39" lengthAdjust="spacingAndGlyphs">0.81100</text>
<text x="1799" y="699" textLength="39" lengthAdjust="spacingAndGlyphs">0.81000</text>
<text x="1799" y="794" textLength="30" lengthAdjust="spacingAndGlyphs">16000</text>
<text x="1799" y="829" textLength="30" lengthAdjust="spacingAndGlyphs">12000</text>
<text x="1799" y="864" textLength="24" lengthAdjust="spacingAndGlyphs">8000</text>
<text x="1799" y="899" textLength="24" lengthAdjust="spacingAndGlyphs">4000</text>
</g>
<path d="M1799.5 765q2.5-5 5 0M1799.5 929.5q2.5-5 5 0M1799.5 977q2.5-5 5 0" stroke="#333" fill="none"/>

<!-- time axis -->
<g fill="#000"><rect x="57.5" y="983" width="18.5" height="15"/><rect x="195" y="983" width="19" height="15"/><rect x="333" y="983" width="19" height="15"/><rect x="468" y="983" width="25" height="15"/><rect x="606" y="983" width="25" height="15"/><rect x="744" y="983" width="25" height="15"/><rect x="882" y="983" width="25" height="15"/><rect x="1020" y="983" width="25" height="15"/><rect x="1158" y="983" width="25" height="15"/><rect x="1296" y="983" width="25" height="15"/><rect x="1434" y="983" width="25" height="15"/><rect x="1572" y="983" width="25" height="15"/><rect x="1716" y="983" width="25" height="15"/></g>
<g class="tm">
<text x="0" y="995" textLength="26" lengthAdjust="spacingAndGlyphs">14:00</text>
<text x="86" y="995" textLength="21" lengthAdjust="spacingAndGlyphs">5:00</text><text x="120" y="995" textLength="26" lengthAdjust="spacingAndGlyphs">11:00</text><text x="155" y="995" textLength="27" lengthAdjust="spacingAndGlyphs">17:00</text>
<text x="225" y="995" textLength="20" lengthAdjust="spacingAndGlyphs">5:00</text><text x="258" y="995" textLength="26" lengthAdjust="spacingAndGlyphs">11:00</text><text x="294" y="995" textLength="26" lengthAdjust="spacingAndGlyphs">17:00</text>
<text x="363" y="995" textLength="20" lengthAdjust="spacingAndGlyphs">5:00</text><text x="396" y="995" textLength="26" lengthAdjust="spacingAndGlyphs">11:00</text><text x="432" y="995" textLength="26" lengthAdjust="spacingAndGlyphs">17:00</text>
<text x="506" y="995" textLength="21" lengthAdjust="spacingAndGlyphs">6:00</text><text x="540" y="995" textLength="26" lengthAdjust="spacingAndGlyphs">12:00</text>
<text x="644" y="995" textLength="21" lengthAdjust="spacingAndGlyphs">6:00</text><text x="678" y="995" textLength="26" lengthAdjust="spacingAndGlyphs">12:00</text>
<text x="782" y="995" textLength="21" lengthAdjust="spacingAndGlyphs">6:00</text><text x="816" y="995" textLength="26" lengthAdjust="spacingAndGlyphs">12:00</text>
<text x="920" y="995" textLength="21" lengthAdjust="spacingAndGlyphs">6:00</text><text x="953" y="995" textLength="27" lengthAdjust="spacingAndGlyphs">12:00</text>
<text x="1058" y="995" textLength="21" lengthAdjust="spacingAndGlyphs">6:00</text><text x="1091" y="995" textLength="27" lengthAdjust="spacingAndGlyphs">12:00</text>
<text x="1196" y="995" textLength="21" lengthAdjust="spacingAndGlyphs">6:00</text><text x="1230" y="995" textLength="26" lengthAdjust="spacingAndGlyphs">12:00</text>
<text x="1334" y="995" textLength="21" lengthAdjust="spacingAndGlyphs">6:00</text><text x="1367" y="995" textLength="27" lengthAdjust="spacingAndGlyphs">12:00</text>
<text x="1472" y="995" textLength="21" lengthAdjust="spacingAndGlyphs">6:00</text><text x="1505" y="995" textLength="27" lengthAdjust="spacingAndGlyphs">12:00</text>
<text x="1610" y="995" textLength="21" lengthAdjust="spacingAndGlyphs">6:00</text><text x="1643" y="995" textLength="27" lengthAdjust="spacingAndGlyphs">12:00</text><text x="1678" y="995" textLength="28" lengthAdjust="spacingAndGlyphs">18:00</text>
<text x="1754" y="995" textLength="21" lengthAdjust="spacingAndGlyphs">6:00</text>
</g>
<g class="tw tm">
<text x="59" y="995" textLength="16" lengthAdjust="spacingAndGlyphs">5-5</text><text x="196" y="995" textLength="17" lengthAdjust="spacingAndGlyphs">5-6</text><text x="334" y="995" textLength="17" lengthAdjust="spacingAndGlyphs">5-7</text>
<text x="469" y="995" textLength="23" lengthAdjust="spacingAndGlyphs">5-10</text><text x="607" y="995" textLength="23" lengthAdjust="spacingAndGlyphs">5-11</text><text x="745" y="995" textLength="23" lengthAdjust="spacingAndGlyphs">5-12</text><text x="883" y="995" textLength="23" lengthAdjust="spacingAndGlyphs">5-13</text>
<text x="1021" y="995" textLength="23" lengthAdjust="spacingAndGlyphs">5-14</text><text x="1159" y="995" textLength="23" lengthAdjust="spacingAndGlyphs">5-17</text><text x="1297" y="995" textLength="23" lengthAdjust="spacingAndGlyphs">5-18</text><text x="1435" y="995" textLength="23" lengthAdjust="spacingAndGlyphs">5-19</text><text x="1573" y="995" textLength="23" lengthAdjust="spacingAndGlyphs">5-20</text><text x="1717" y="995" textLength="23" lengthAdjust="spacingAndGlyphs">5-21</text>
</g>
<rect x="1830" y="982" width="14" height="15" fill="#00c000"/>
<text x="1833" y="995" textLength="8" lengthAdjust="spacingAndGlyphs" style="fill:#003000">5</text>

<!-- scrollbar -->
<rect x="0" y="999" width="1845" height="16" fill="#eeeeee"/>
<rect x="1811" y="999" width="15" height="15" fill="#c8c8c8"/>
<path d="M1833 1002l4 4.5-4 4.5" stroke="#555" stroke-width="1.8" fill="none"/>
<rect x="0" y="1015" width="1845" height="1.5" fill="#d4d4d4"/>

<!-- chart tabs -->
<rect x="0" y="1016" width="1845" height="24" fill="#e8e8e8"/>
<rect x="760" y="1016" width="145" height="24" fill="#0078d7"/>
<g fill="#a8a8a8"><rect x="59" y="1016" width="1" height="24"/><rect x="198" y="1016" width="1" height="24"/><rect x="337" y="1016" width="1" height="24"/><rect x="476" y="1016" width="1" height="24"/><rect x="615" y="1016" width="1" height="24"/><rect x="1089" y="1016" width="1" height="24"/><rect x="1260" y="1016" width="1" height="24"/><rect x="1431" y="1016" width="1" height="24"/><rect x="1576" y="1016" width="1" height="24"/><rect x="1708" y="1016" width="1" height="24"/><rect x="1840" y="1016" width="1" height="24"/></g>
<g class="tab">
<text x="3.5" y="1033" textLength="51" lengthAdjust="spacingAndGlyphs">1 Min   #1</text>
<text x="63" y="1033" textLength="131" lengthAdjust="spacingAndGlyphs">6CM21-CME  2 Min   #11</text>
<text x="202" y="1033" textLength="131" lengthAdjust="spacingAndGlyphs">6CM21-CME  3 Min   #12</text>
<text x="341" y="1033" textLength="131" lengthAdjust="spacingAndGlyphs">6CM21-CME  4 Min   #13</text>
<text x="480" y="1033" textLength="131" lengthAdjust="spacingAndGlyphs">6CM21-CME  5 Min   #14</text>
<text x="619" y="1033" textLength="137" lengthAdjust="spacingAndGlyphs">6CM21-CME  15 Min   #15</text>
<text x="764" y="1033" textLength="137" lengthAdjust="spacingAndGlyphs" style="fill:#fff">6CM21-CME  60 Min   #16</text>
<text x="910" y="1033" textLength="175" lengthAdjust="spacingAndGlyphs">6CM21-CME [CBV]  240 Min   #17</text>
<text x="1093" y="1033" textLength="163" lengthAdjust="spacingAndGlyphs">6CM21-CME [CBV]  1 Day   #18</text>
<text x="1264" y="1033" textLength="163" lengthAdjust="spacingAndGlyphs">6CM21-CME [CBV]  7 Day   #19</text>
<text x="1435" y="1033" textLength="137" lengthAdjust="spacingAndGlyphs">6CM21-CME  240 Min   #2</text>
<text x="1580" y="1033" textLength="125" lengthAdjust="spacingAndGlyphs">6CM21-CME  1 Day   #3</text>
<text x="1712" y="1033" textLength="124" lengthAdjust="spacingAndGlyphs">6CM21-CME  7 Day   #4</text>
</g>

<!-- taskbar -->
<defs><linearGradient id="tb" x1="0" x2="1" y1="0" y2="0"><stop offset="0" stop-color="#402c33"/><stop offset=".45" stop-color="#372943"/><stop offset="1" stop-color="#2f2650"/></linearGradient></defs>
<rect x="318" y="1040" width="1527" height="39" fill="url(#tb)"/>
<rect x="0" y="1040" width="318" height="39" fill="#f0f0f0"/>
<text x="14" y="1065" textLength="36" lengthAdjust="spacingAndGlyphs" style="font-size:15px;fill:#333">Cerca</text>
<path d="M-2 1052a4 4 0 1 1 0 8" stroke="#333" fill="none"/>
<circle cx="342" cy="1060" r="7" fill="none" stroke="#fff" stroke-width="2"/>
<path d="M383 1053h12M383 1067h12M384 1056h7v8h-7zM395 1056v2M395 1062v2" stroke="#fff" fill="none" stroke-width="1.3"/>
<circle cx="441" cy="1060" r="11" fill="#0c2030" stroke="#2f8fb0" stroke-width="1.5"/>
<path d="M441 1050l5 7-3 8h-4l-3-8z" fill="#fff"/><circle cx="441" cy="1059" r="1.5" fill="#0c2030"/>
<path d="M479 1053h8l2 2h10v5h-20z" fill="#e8b83a"/><rect x="479" y="1058" width="20" height="13" fill="#f6d04f"/><rect x="486" y="1065" width="6" height="6" fill="#2a8fd8"/>
<rect x="529" y="1050" width="20" height="20" fill="#2a9ad8"/><rect x="532" y="1054" width="6" height="10" fill="#f4e9a0"/><path d="M540 1055h6M540 1058h6M540 1061h6" stroke="#fff" stroke-width="1.5"/><rect x="529" y="1067" width="20" height="3" fill="#1a6fb0"/>
<path d="M579 1055h20v16h-20z" fill="#f2f2f2"/><path d="M585 1055v-3a4 4 0 0 1 8 0v3" stroke="#ddd" stroke-width="1.5" fill="none"/>
<rect x="585" y="1059" width="4" height="4" fill="#f25022"/><rect x="590" y="1059" width="4" height="4" fill="#7fba00"/><rect x="585" y="1064" width="4" height="4" fill="#00a4ef"/><rect x="590" y="1064" width="4" height="4" fill="#ffb900"/>
<path d="M626 1057l11-8 11 8v14h-22z" fill="#3aa4e6"/><path d="M626 1057l11 8 11-8" stroke="#fff" stroke-width="1.5" fill="#8fd0f6"/>
<ellipse cx="685" cy="1060" rx="8" ry="11" fill="none" stroke="#e01020" stroke-width="5"/>
<circle cx="735" cy="1060" r="12" fill="#2a3f90" stroke="#c8d0f0" stroke-width="1.3"/>
<text x="729" y="1066" textLength="12" lengthAdjust="spacingAndGlyphs" style="font-size:16px;font-family:'Liberation Serif',serif;font-weight:bold;fill:#fff">if</text>
<circle cx="784" cy="1060" r="11" fill="#3f9ad0"/><path d="M779 1051q7 2 8 7-2 4-1 8l-3 4q-4-6-6-9-2-5 2-10z" fill="#7cc040"/><path d="M788 1052q5 3 6 7l-4 1z" fill="#8fc848"/>
<rect x="666" y="1078" width="38" height="1" fill="#ccc"/><rect x="715" y="1078" width="39" height="1" fill="#ccc"/><rect x="763" y="1078" width="41" height="1" fill="#ccc"/>
<path d="M1610 1063l5-6 5 6" stroke="#fff" stroke-width="1.5" fill="none"/>
<path d="M1639 1051c-5 0-7 3-7 6 0 4 7 11 7 11s7-7 7-11c0-3-2-6-7-6z" fill="#fff"/><circle cx="1639" cy="1057" r="3" fill="#33294a"/>
<path d="M1659 1054h8v12h-8zM1660 1051h6M1660 1069h6M1667 1058l3-1v6l-3-1" stroke="#ddd" fill="none"/>
<path d="M1683 1052h12v10h-12zM1680 1058h6v7h-6zM1686 1068h10M1691 1062v6" stroke="#ddd" fill="none"/>
<path d="M1703 1058h3l4-4v12l-4-4h-3zM1713 1056q2 4 0 8M1716 1054q3 6 0 12" stroke="#ddd" fill="none"/>
<rect x="1722" y="1040" width="71" height="39" fill="#3f3768"/>
<g class="tw">
<text x="1744" y="1056" textLength="28" lengthAdjust="spacingAndGlyphs">19:06</text>
<text x="1728" y="1073" textLength="59" lengthAdjust="spacingAndGlyphs">20/05/2021</text>
</g>
<path d="M1805 1052h16v14h-6l-2 3v-3h-8z" fill="#f4f4f4"/><path d="M1808 1056h10M1808 1059h10M1808 1062h7" stroke="#33294a"/>
</svg>
</body></html>
